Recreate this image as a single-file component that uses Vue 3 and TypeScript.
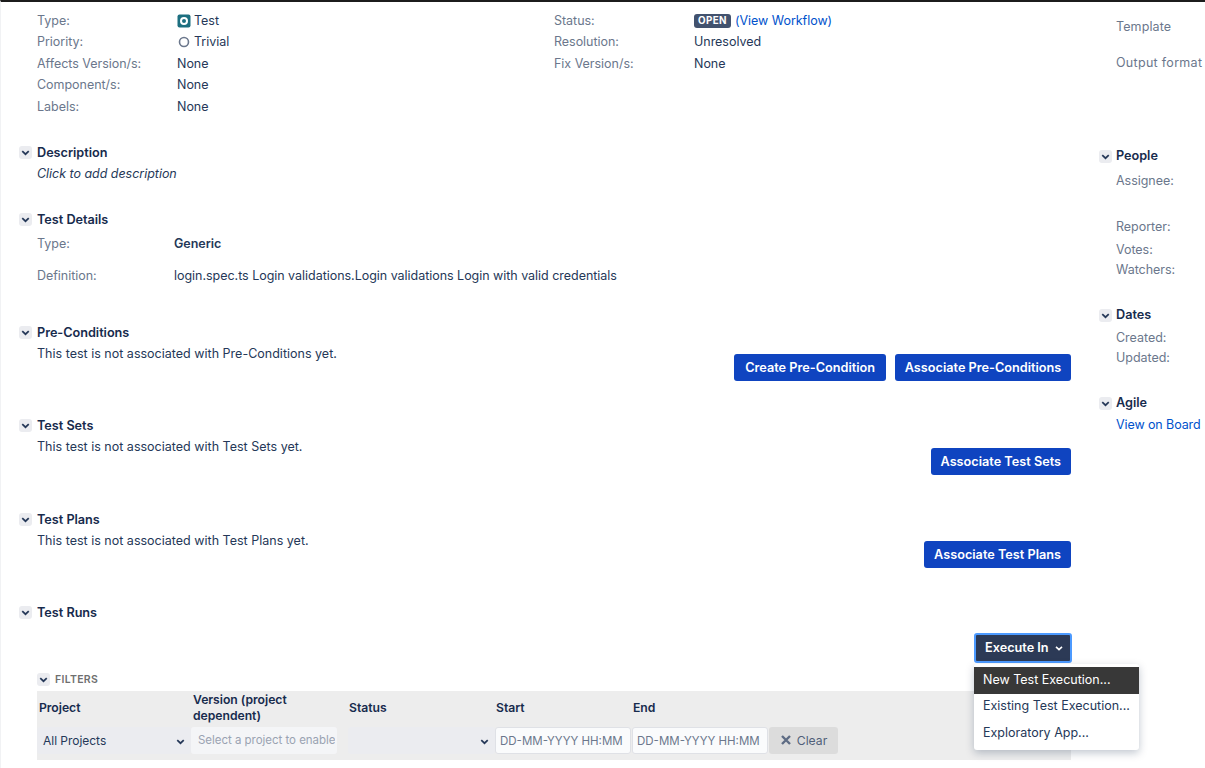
<script setup lang="ts">
const leftFields = [
  { label: 'Affects Version/s:', value: 'None' },
  { label: 'Component/s:', value: 'None' },
  { label: 'Labels:', value: 'None' },
]
</script>

<template>
  <div class="page">
    <main class="main">
      <div class="fields">
        <div class="field-col">
          <div class="row"><span class="lbl">Type:</span><span class="val with-icon"><svg class="ticon" viewBox="0 0 14 14"><rect width="13" height="13" rx="2" x=".5" y=".5" fill="#1d6f80"/><circle cx="7" cy="7" r="3" fill="none" stroke="#fff" stroke-width="2"/></svg>Test</span></div>
          <div class="row"><span class="lbl">Priority:</span><span class="val with-icon"><svg class="ticon" viewBox="0 0 14 14"><circle cx="7" cy="7" r="4.5" fill="none" stroke="#6b778c" stroke-width="1.6"/></svg>Trivial</span></div>
          <div v-for="f in leftFields" :key="f.label" class="row"><span class="lbl">{{ f.label }}</span><span class="val">{{ f.value }}</span></div>
        </div>
        <div class="field-col col-right">
          <div class="row"><span class="lbl">Status:</span><span class="val"><span class="lozenge">OPEN</span> <a class="link">(View Workflow)</a></span></div>
          <div class="row"><span class="lbl">Resolution:</span><span class="val">Unresolved</span></div>
          <div class="row"><span class="lbl">Fix Version/s:</span><span class="val">None</span></div>
        </div>
      </div>

      <section class="sec sec-desc">
        <h3 class="head"><span class="tog"><svg viewBox="0 0 12 12"><path d="M3 4.8 6 7.6 9 4.8" /></svg></span>Description</h3>
        <p class="body-text italic">Click to add description</p>
      </section>

      <section class="sec sec-details">
        <h3 class="head"><span class="tog"><svg viewBox="0 0 12 12"><path d="M3 4.8 6 7.6 9 4.8" /></svg></span>Test Details</h3>
        <div class="detail d1"><span class="dl">Type:</span><strong>Generic</strong></div>
        <div class="detail d2"><span class="dl">Definition:</span><span>login.spec.ts Login validations.Login validations Login with valid credentials</span></div>
      </section>

      <section class="sec sec-pre">
        <h3 class="head"><span class="tog"><svg viewBox="0 0 12 12"><path d="M3 4.8 6 7.6 9 4.8" /></svg></span>Pre-Conditions</h3>
        <div class="split">
          <p class="body-text">This test is not associated with Pre-Conditions yet.</p>
          <div class="btns btns-pre"><button class="btn">Create Pre-Condition</button><button class="btn">Associate Pre-Conditions</button></div>
        </div>
      </section>

      <section class="sec sec-sets">
        <h3 class="head"><span class="tog"><svg viewBox="0 0 12 12"><path d="M3 4.8 6 7.6 9 4.8" /></svg></span>Test Sets</h3>
        <div class="split">
          <p class="body-text">This test is not associated with Test Sets yet.</p>
          <div class="btns btns-sets"><button class="btn">Associate Test Sets</button></div>
        </div>
      </section>

      <section class="sec sec-plans">
        <h3 class="head"><span class="tog"><svg viewBox="0 0 12 12"><path d="M3 4.8 6 7.6 9 4.8" /></svg></span>Test Plans</h3>
        <div class="split">
          <p class="body-text">This test is not associated with Test Plans yet.</p>
          <div class="btns btns-plans"><button class="btn">Associate Test Plans</button></div>
        </div>
      </section>

      <section class="sec sec-runs">
        <h3 class="head"><span class="tog"><svg viewBox="0 0 12 12"><path d="M3 4.8 6 7.6 9 4.8" /></svg></span>Test Runs</h3>
        <div class="exec-row">
          <div class="exec-wrap">
            <button class="exec">Execute In<svg viewBox="0 0 12 12"><path d="M3 4.8 6 7.6 9 4.8" /></svg></button>
            <div class="menu">
              <div class="item active">New Test Execution...</div>
              <div class="item second">Existing Test Execution...</div>
              <div class="item">Exploratory App...</div>
            </div>
          </div>
        </div>
        <div class="filters-head"><span class="tog"><svg viewBox="0 0 12 12"><path d="M3 4.8 6 7.6 9 4.8" /></svg></span>FILTERS</div>
        <div class="filters">
          <div class="fcol c1"><label>Project</label><div class="sel">All Projects<svg viewBox="0 0 12 12"><path d="M3 4.8 6 7.6 9 4.8" /></svg></div></div>
          <div class="fcol c2"><label>Version (project dependent)</label><div class="sel dis"><span>Select a project to enable</span></div></div>
          <div class="fcol c3"><label>Status</label><div class="sel"><svg viewBox="0 0 12 12"><path d="M3 4.8 6 7.6 9 4.8" /></svg></div></div>
          <div class="fcol c4"><label>Start</label><div class="date">DD-MM-YYYY HH:MM</div></div>
          <div class="fcol c4"><label>End</label><div class="date">DD-MM-YYYY HH:MM</div></div>
          <button class="clear"><svg viewBox="0 0 12 12"><path d="M2 2 10 10M10 2 2 10" /></svg>Clear</button>
        </div>
      </section>
    </main>

    <aside class="side">
      <div class="side-opts">
        <div class="sl">Template</div>
        <div class="sl opt2">Output format</div>
      </div>
      <section class="side-sec people">
        <h3 class="head"><span class="tog"><svg viewBox="0 0 12 12"><path d="M3 4.8 6 7.6 9 4.8" /></svg></span>People</h3>
        <div class="sl s1">Assignee:</div>
        <div class="sl s2">Reporter:</div>
        <div class="sl s3">Votes:</div>
        <div class="sl s4">Watchers:</div>
      </section>
      <section class="side-sec dates">
        <h3 class="head"><span class="tog"><svg viewBox="0 0 12 12"><path d="M3 4.8 6 7.6 9 4.8" /></svg></span>Dates</h3>
        <div class="sl s5">Created:</div>
        <div class="sl s4">Updated:</div>
      </section>
      <section class="side-sec agile">
        <h3 class="head"><span class="tog"><svg viewBox="0 0 12 12"><path d="M3 4.8 6 7.6 9 4.8" /></svg></span>Agile</h3>
        <a class="link board">View on Board</a>
      </section>
    </aside>
  </div>
</template>

<style>
html, body { margin: 0; background: #fff; overflow: hidden; }
</style>

<style scoped>
.page {
  display: flex;
  width: 1205px;
  height: 768px;
  box-sizing: border-box;
  border-top: 2px solid #1c1c1c;
  border-left: 1px solid #f1f2f4;
  overflow: hidden;
  font: 12.5px/18px Inter, "Liberation Sans", sans-serif;
  color: #253858;
  letter-spacing: -0.03px;
}
.main { width: 1052px; margin-left: 18px; flex: none; }
.side { width: 106px; margin-left: 28px; flex: none; white-space: nowrap; }
.side .head { gap: 4px; }
.fields { display: flex; padding: 8px 0 0 18px; }
.field-col { width: 517px; }
.row { display: flex; height: 21.5px; align-items: center; }
.lbl { width: 140px; color: #6b778c; flex: none; }
.val { display: flex; align-items: center; gap: 4px; }
.with-icon { gap: 3px; }
.ticon { width: 14px; height: 14px; flex: none; }
.lozenge {
  background: #42526e;
  color: #fff;
  font-size: 9.8px;
  font-weight: 700;
  line-height: 14px;
  padding: 0 4px;
  border-radius: 3px;
  letter-spacing: 0.4px;
}
.link { color: #0052cc; }
.tog {
  width: 13px;
  height: 13px;
  background: #ebecf0;
  border-radius: 3px;
  display: inline-flex;
  flex: none;
}
.tog svg, .exec svg, .sel svg { width: 13px; height: 13px; fill: none; stroke: #253858; stroke-width: 1.6; }
.head {
  margin: 0;
  font-size: 12.7px;
  line-height: 18px;
  font-weight: 600;
  color: #172b4d;
  display: flex;
  align-items: center;
  gap: 5px;
}
.body-text { margin: 3px 0 0 18px; letter-spacing: 0.01px; }
.italic { font-style: italic; letter-spacing: -0.03px; }
.sec-desc { margin-top: 26px; }
.sec-details { margin-top: 28px; }
.detail { display: flex; margin-left: 18px; }
.dl { width: 137px; color: #6b778c; flex: none; }
.detail strong { font-weight: 600; color: #253858; }
.d1 { margin-top: 6px; }
.d2 { margin-top: 14px; }
.sec-pre { margin-top: 39px; }
.split { display: flex; justify-content: space-between; align-items: flex-start; }
.btns { display: flex; gap: 9px; }
.btns-pre { margin-top: 12px; }
.btns-sets { margin-top: 13px; }
.btns-plans { margin-top: 12px; }
.btn {
  height: 27px;
  padding: 0 10px;
  border: none;
  border-radius: 3px;
  background: #0f44c0;
  color: #fff;
  font: 600 12.7px/27px Inter, "Liberation Sans", sans-serif;
  letter-spacing: 0;
  white-space: nowrap;
}
.btns-pre .btn:first-child { padding: 0 11px; }
.btns-pre .btn:last-child { width: 176px; padding: 0; }
.sec-sets { margin-top: 36px; }
.sec-plans { margin-top: 36px; }
.sec-runs { margin-top: 36px; }
.exec-row { display: flex; justify-content: flex-end; margin-top: 11px; height: 29px; }
.exec-wrap { position: relative; }
.exec {
  height: 30px;
  width: 98px;
  box-sizing: border-box;
  margin-right: -1px;
  border: 2px solid #4c9aff;
  border-radius: 3px;
  background: #2c3a56;
  color: #fff;
  font: 600 12.7px/25px Inter, "Liberation Sans", sans-serif;
  display: flex;
  align-items: center;
  justify-content: flex-start;
  gap: 4px;
  padding: 0 0 0 9px;
}
.exec svg { stroke: #fff; width: 12px; height: 12px; }
.menu {
  position: absolute;
  top: 31px;
  left: 0;
  width: 165px;
  height: 86px;
  padding-top: 3px;
  box-sizing: border-box;
  background: #fff;
  border-radius: 3px;
  box-shadow: 0 3px 8px rgba(9, 30, 66, 0.25);
  z-index: 5;
  white-space: nowrap;
}
.item { height: 26.5px; line-height: 25px; padding-left: 9px; letter-spacing: 0; }
.second { height: 26px; line-height: 24px; }
.active { background: #383838; color: #fff; height: 27px; }
.filters-head {
  display: flex;
  align-items: center;
  gap: 5px;
  margin: 9px 0 0 18px;
  font-size: 10.5px;
  font-weight: 600;
  line-height: 18px;
  color: #6f6f6f;
  letter-spacing: 0.3px;
}
.filters {
  margin: 2px 0 0 18px;
  height: 69px;
  width: 1034px;
  background: #ededed;
  display: flex;
  align-items: flex-start;
}
.fcol { display: flex; flex-direction: column; flex: none; }
.fcol label {
  height: 35px;
  margin-bottom: 1px;
  display: flex;
  align-items: center;
  font-weight: 600;
  font-size: 12.2px;
  line-height: 16px;
  color: #172b4d;
  padding-left: 2px;
}
.c1 { width: 154px; }
.c2 { width: 157px; }
.c3 { width: 147px; }
.c4 { width: 137px; }
.c3 label { padding-left: 1px; }
.c4 label { padding-left: 1px; }
.sel {
  height: 27px;
  background: #ebecf0;
  border-radius: 3px;
  display: flex;
  align-items: center;
  justify-content: space-between;
  padding: 2px 4px 0 6px;
  font-size: 12px;
  color: #253858;
  box-sizing: border-box;
}
.c3 .sel { justify-content: flex-end; }
.sel.dis { background: #f4f5f7; color: #9aa3b2; overflow: hidden; white-space: nowrap; width: 146px; padding: 0 0 0 7px; font-size: 11.5px; }
.sel.dis span { overflow: hidden; }
.date {
  height: 27px;
  width: 136px;
  box-sizing: border-box;
  background: #fafbfc;
  border: 1px solid #dfe1e6;
  border-radius: 3px;
  font-size: 11.5px;
  line-height: 27px;
  padding-left: 4px;
  color: #6b778c;
  white-space: nowrap;
  letter-spacing: 0;
}
.clear {
  height: 27px;
  margin-top: 36px;
  width: 69px;
  background: #dcdcdc;
  border: none;
  border-radius: 3px;
  color: #505f79;
  font: 12.2px Inter, "Liberation Sans", sans-serif;
  display: flex;
  align-items: center;
  justify-content: center;
  gap: 5px;
  padding: 0;
}
.clear svg { width: 12px; height: 12px; fill: none; stroke: #5e6c84; stroke-width: 2.4; }
.sl { color: #6b778c; padding-left: 17px; }
.side-opts { margin-top: 16px; height: 129px; }
.side-opts .sl { letter-spacing: 0.1px; }
.side-opts .opt2 { margin-top: 18px; letter-spacing: 0.3px; }
.s1 { margin-top: 7px; }
.s2 { margin-top: 28px; }
.s3 { margin-top: 5px; }
.s4 { margin-top: 2px; }
.s5 { margin-top: 5px; }
.dates { margin-top: 27px; }
.agile { margin-top: 27px; }
.board { display: block; padding-left: 17px; margin-top: 4px; letter-spacing: -0.1px; }
</style>
